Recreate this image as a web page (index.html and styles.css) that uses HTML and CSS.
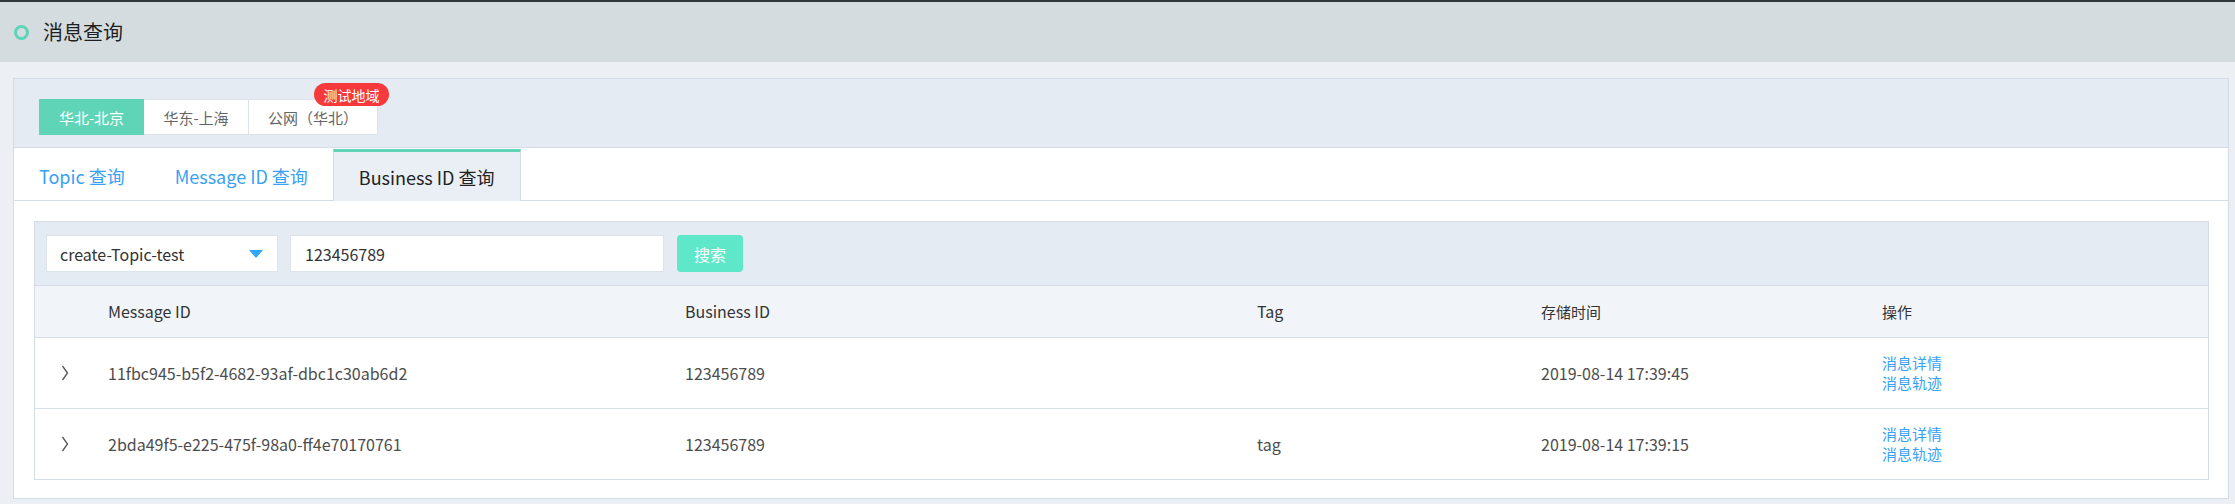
FILE: index.html
```html
<!DOCTYPE html>
<html lang="zh-CN">
<head>
<meta charset="utf-8">
<title>消息查询</title>
<link rel="stylesheet" href="styles.css">
</head>
<body>
<header class="topbar">
  <span class="dot"></span>
  <h1 class="title">消息查询</h1>
</header>
<section class="panel">
  <div class="regions">
    <div class="region-tabs">
      <div class="rtab active">华北-北京</div>
      <div class="rtab">华东-上海</div>
      <div class="rtab wide">公网（华北）<span class="badge">测试地域</span></div>
    </div>
  </div>
  <div class="panel-body">
    <nav class="tabs">
      <div class="tab">Topic 查询</div>
      <div class="tab">Message ID 查询</div>
      <div class="tab active">Business ID 查询</div>
    </nav>
    <div class="content">
      <div class="box">
        <div class="toolbar">
          <div class="select">
            <span>create-Topic-test</span>
            <span class="caret"></span>
          </div>
          <div class="input">123456789</div>
          <button class="btn">搜索</button>
        </div>
        <table class="grid">
          <colgroup>
            <col class="c-exp">
            <col class="c-mid">
            <col class="c-bid">
            <col class="c-tag">
            <col class="c-time">
            <col>
          </colgroup>
          <thead>
            <tr>
              <th></th>
              <th>Message ID</th>
              <th>Business ID</th>
              <th>Tag</th>
              <th class="cjk">存储时间</th>
              <th class="cjk">操作</th>
            </tr>
          </thead>
          <tbody>
            <tr>
              <td class="exp"><svg width="8" height="16" viewBox="0 0 8 16"><polyline points="1.5,1 6.5,8 1.5,15" fill="none" stroke="#555" stroke-width="1.3"/></svg></td>
              <td>11fbc945-b5f2-4682-93af-dbc1c30ab6d2</td>
              <td>123456789</td>
              <td></td>
              <td>2019-08-14 17:39:45</td>
              <td class="ops"><a>消息详情</a><a>消息轨迹</a></td>
            </tr>
            <tr>
              <td class="exp"><svg width="8" height="16" viewBox="0 0 8 16"><polyline points="1.5,1 6.5,8 1.5,15" fill="none" stroke="#555" stroke-width="1.3"/></svg></td>
              <td>2bda49f5-e225-475f-98a0-ff4e70170761</td>
              <td>123456789</td>
              <td>tag</td>
              <td>2019-08-14 17:39:15</td>
              <td class="ops"><a>消息详情</a><a>消息轨迹</a></td>
            </tr>
          </tbody>
        </table>
      </div>
    </div>
  </div>
</section>
</body>
</html>
```

FILE: styles.css
```css
* { box-sizing: border-box; }
html, body { margin: 0; padding: 0; }
body {
  background: #ecf0f4;
  font-family: "Noto Sans CJK SC", "Noto Sans", sans-serif;
  color: #333;
  width: 2235px;
  height: 504px;
  overflow: hidden;
}

.topbar {
  height: 62px;
  border-top: 2px solid #30353a;
  background: #d5dce0;
  display: flex;
  align-items: center;
  padding-left: 14px;
}
.dot {
  width: 15px;
  height: 15px;
  border: 3px solid #5dd3b7;
  border-radius: 50%;
  margin-right: 14px;
}
.title {
  margin: 0;
  font-size: 20px;
  font-weight: normal;
  color: #1f1f1f;
  line-height: 1;
}

.panel {
  margin: 16px 6px 0 13px;
  height: 421px;
  border: 1px solid #d4dde7;
  background: #fff;
  display: flex;
  flex-direction: column;
}
.regions {
  background: #e4ebf3;
  padding: 20px 0 12px 25px;
  border-bottom: 1px solid #d4dde7;
}
.region-tabs { display: flex; }
.rtab {
  position: relative;
  height: 36px;
  width: 105px;
  display: flex;
  align-items: center;
  justify-content: center;
  background: #fff;
  border: 1px solid #dbe2ea;
  font-size: 15px;
  color: #666;
  white-space: nowrap;
}
.rtab.wide { width: 129px; }
.rtab + .rtab { border-left: none; }
.rtab.active {
  background: #5fd4b6;
  border-color: #5fd4b6;
  color: #fff;
}
.badge {
  position: absolute;
  left: 65px;
  top: -17px;
  width: 75px;
  height: 23px;
  border-radius: 12px;
  background: #f63a3c;
  color: #fff;
  font-size: 14px;
  display: flex;
  align-items: center;
  justify-content: center;
  line-height: 1;
}

.panel-body { flex: 1; display: flex; flex-direction: column; }
.tabs {
  display: flex;
  padding-top: 1px;
  border-bottom: 1px solid #d4dde7;
}
.tab {
  height: 51px;
  padding: 0 25px;
  display: flex;
  align-items: center;
  font-size: 18px;
  color: #38a1f4;
  border-top: 3px solid transparent;
}
.tab.active {
  background: #e9eff5;
  color: #222;
  border-top-color: #5fd4b6;
  border-left: 1px solid #d4dde7;
  border-right: 1px solid #d4dde7;
  margin-bottom: -1px;
  height: 52px;
}

.content { padding: 20px 19px 19px 20px; flex: 1; }
.box {
  border: 1px solid #d4dde7;
}
.toolbar {
  background: #e4ebf3;
  padding: 13px 11px;
  display: flex;
  align-items: center;
  border-bottom: 1px solid #d4dde7;
}
.select {
  width: 232px;
  height: 37px;
  background: #fff;
  border: 1px solid #dde3ea;
  display: flex;
  align-items: center;
  justify-content: space-between;
  padding: 0 14px 0 13px;
  font-size: 16px;
  color: #333;
}
.caret {
  width: 0;
  height: 0;
  border-left: 7px solid transparent;
  border-right: 7px solid transparent;
  border-top: 8px solid #30a6ff;
}
.input {
  margin-left: 12px;
  width: 374px;
  height: 37px;
  background: #fff;
  border: 1px solid #dde3ea;
  display: flex;
  align-items: center;
  padding-left: 14px;
  font-size: 16px;
  color: #333;
}
.btn {
  margin-left: 13px;
  width: 66px;
  height: 37px;
  border: none;
  border-radius: 4px;
  background: #5ee7c9;
  color: #fff;
  font-family: inherit;
  font-size: 16px;
  padding: 0;
}

.grid {
  width: 100%;
  border-collapse: collapse;
  table-layout: fixed;
  font-size: 16px;
}
.c-exp { width: 73px; }
.c-mid { width: 577px; }
.c-bid { width: 572px; }
.c-tag { width: 284px; }
.c-time { width: 341px; }
.grid th {
  height: 51px;
  background: #f1f5f9;
  text-align: left;
  font-weight: normal;
  color: #333;
  padding: 0;
  border-bottom: 1px solid #d8e0e8;
}
.grid th.cjk { font-size: 15px; }
.grid td {
  height: 71px;
  padding: 0;
  color: #4d4d4d;
  border-bottom: 1px solid #d8e0e8;
}
.grid tbody tr:last-child td { border-bottom: none; }
.grid td.exp { padding-left: 26px; }
.grid td.exp svg { display: block; }
.grid td.ops { font-size: 15px; }
.ops a {
  display: block;
  color: #38a1f4;
  line-height: 20px;
}
```
